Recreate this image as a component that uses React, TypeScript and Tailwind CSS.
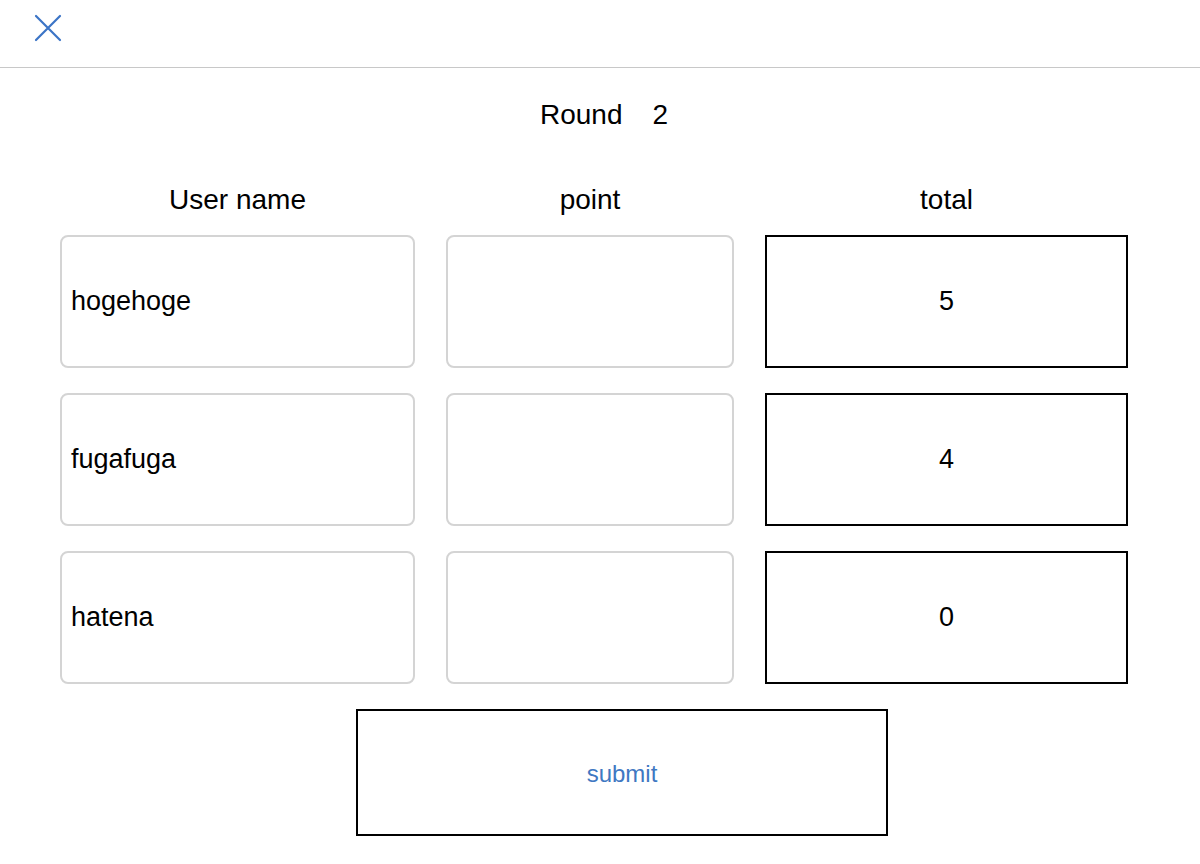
import { ReactNode } from 'react';

const rows = [
  { name: 'hogehoge', total: 5 },
  { name: 'fugafuga', total: 4 },
  { name: 'hatena', total: 0 },
];

function Field({ children }: { children?: ReactNode }) {
  return (
    <div className="h-[133px] rounded-[8px] border-2 border-[#d4d4d4] flex items-center pl-[9px] text-[27px] text-black">
      {children}
    </div>
  );
}

export default function App() {
  return (
    <div className="min-h-screen bg-white text-black" style={{ fontFamily: '"Liberation Sans", Arial, sans-serif' }}>
      <header className="h-[68px] border-b border-[#c8c8c8] flex items-start pl-[34px] pt-[14px]">
        <svg width="28" height="28" viewBox="0 0 28 28" className="text-[#3b74c6]">
          <path d="M2 2 L26 26 M26 2 L2 26" stroke="currentColor" strokeWidth="2.2" strokeLinecap="round" fill="none" />
        </svg>
      </header>

      <div className="pt-[31px] text-center text-[28px] leading-[32px] pl-[8px]">
        <span>Round</span>
        <span className="ml-[30px]">2</span>
      </div>

      <div className="mt-[53px] pl-[60px] grid grid-cols-[355px_288px_363px] gap-x-[31px]">
        <div className="text-center text-[28px] leading-[32px]">User name</div>
        <div className="text-center text-[28px] leading-[32px]">point</div>
        <div className="text-center text-[28px] leading-[32px]">total</div>
      </div>

      <div className="mt-[19px] pl-[60px] grid grid-cols-[355px_288px_363px] gap-x-[31px] gap-y-[25px]">
        {rows.map((r) => (
          <>
            <Field key={r.name + 'n'}>{r.name}</Field>
            <Field key={r.name + 'p'} />
            <div key={r.name + 't'} className="h-[133px] border-2 border-black flex items-center justify-center text-[27px]">
              {r.total}
            </div>
          </>
        ))}
      </div>

      <div className="mt-[25px] ml-[356px] w-[532px] h-[127px] border-2 border-black flex items-center justify-center">
        <button className="text-[24px] text-[#3f78c2] pt-[2px]">submit</button>
      </div>
    </div>
  );
}
